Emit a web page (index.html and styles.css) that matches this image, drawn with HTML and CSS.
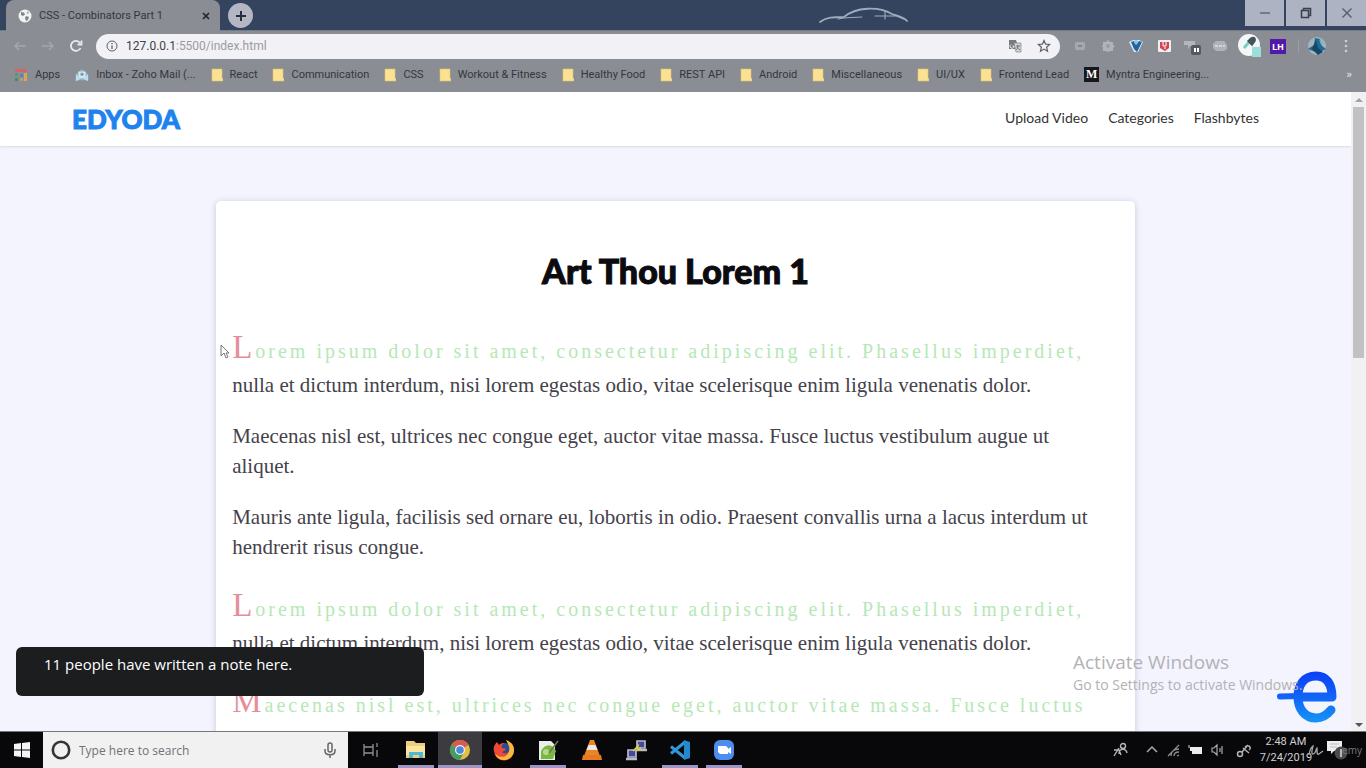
FILE: index.html
```html
<!DOCTYPE html>
<html lang="en">
<head>
<meta charset="utf-8">
<title>CSS - Combinators Part 1</title>
<link rel="stylesheet" href="styles.css">
</head>
<body>
<svg class="defs" aria-hidden="true">
  <symbol id="folder" viewBox="0 0 12 14"><path d="M1 1h10v9l1 1v2H1z" fill="#fbe292" stroke="#e0c86a" stroke-width=".6"/></symbol>
</svg>

<header class="browser">
  <div class="tabstrip">
    <div class="tab">
      <svg class="tab-icon" viewBox="0 0 14 14"><circle cx="7" cy="7" r="6.500" fill="#f1f2f4"/><path d="M3 3l3 .5 1 2-2 1.500-2-1zM8 7l3 1-1 3-2 1-1-3zM9 2l2 2-1.500 1z" fill="#81858c"/></svg>
      <span class="tab-title">CSS - Combinators Part 1</span>
      <button class="tab-close" aria-label="Close tab"><svg width="8" height="8" viewBox="0 0 8 8"><path d="M1 1l6 6M7 1L1 7" stroke="#22252b" stroke-width="1.700"/></svg></button>
    </div>
    <button class="new-tab" aria-label="New tab"><svg width="12" height="12" viewBox="0 0 12 12"><path d="M6 1v10M1 6h10" stroke="#292d35" stroke-width="2"/></svg></button>
    <svg class="car" viewBox="0 0 92 18" fill="none" stroke="#9fabbe" stroke-linecap="round"><path d="M2 15c6-5 14-5 24-5M26 10C38 0 60-1 74 7c6 2 12 3 15 7" stroke-width="1.800"/><path d="M20 12c8-2 14-1 24-2M57 9h22M67 4v8M76 8l12 5" stroke-width="1.100"/></svg>
    <div class="window-buttons">
      <button aria-label="Minimize"><svg width="12" height="12" viewBox="0 0 12 12"><path d="M1 6h10" stroke="#565b66" stroke-width="1.300"/></svg></button>
      <button aria-label="Restore"><svg width="12" height="12" viewBox="0 0 12 12" fill="none" stroke="#3b3f49" stroke-width="1.500"><path d="M1.500 3.500h7v7h-7zM3.500 3V1.500h7v7H9"/></svg></button>
      <button aria-label="Close"><svg width="12" height="12" viewBox="0 0 12 12"><path d="M1.500 1.500l9 9M10.500 1.500l-9 9" stroke="#565b66" stroke-width="1.300"/></svg></button>
    </div>
  </div>

  <div class="toolbar">
    <button aria-label="Back"><svg viewBox="0 0 16 16" fill="none" stroke="#a3a6ad" stroke-width="1.500"><path d="M14 8H3M7 4L3 8l4 4"/></svg></button>
    <button aria-label="Forward"><svg viewBox="0 0 16 16" fill="none" stroke="#a3a6ad" stroke-width="1.500"><path d="M2 8h11M9 4l4 4-4 4"/></svg></button>
    <button aria-label="Reload"><svg viewBox="0 0 16 16" fill="none" stroke="#e9eaed" stroke-width="1.800"><path d="M12.500 10A5 5 0 1 1 12 5M13.500 2.500v4h-4"/></svg></button>
    <div class="address">
      <svg class="i12" viewBox="0 0 12 12" fill="none" stroke="#5d6067"><circle cx="6" cy="6" r="5"/><path d="M6 5.500V9M6 3v1.200" stroke-width="1.300"/></svg>
      <p class="url"><b>127.0.0.1</b>:5500/index.html</p>
      <svg class="i14" viewBox="0 0 14 14"><path d="M1 1h7l3 9H1z" fill="#777a80"/><path d="M6 4h7v9H8z" fill="#d1d2d5" stroke="#85888d" stroke-width=".7"/><path d="M3 5.500a2 2 0 1 0 3 1.500H4.500" fill="none" stroke="#eee"/><path d="M8 7h4M10 6v1c0 2-1 3-2 4M9 8c1 2 2 2 3 3" stroke="#666" fill="none" stroke-width=".8"/></svg>
      <svg class="i14 star" viewBox="0 0 14 14"><path d="M7 1.500l1.600 3.700 4 .3-3 2.700.9 4L7 10.100l-3.500 2.100.9-4-3-2.700 4-.3z" fill="none" stroke="#5d6067" stroke-width="1.200"/></svg>
    </div>
    <div class="extensions">
      <svg viewBox="0 0 20 20"><rect x="5" y="6" width="10" height="8" rx="2" fill="#a5a8ae"/><rect x="8" y="9" width="4" height="2" fill="#83868c"/></svg>
      <svg viewBox="0 0 20 20"><path d="M10 4l2 2h3v3l2 1-2 2v3h-3l-2 1-2-1H5v-3l-1-2 1-1V6h3z" fill="#b1b3b8"/><circle cx="10" cy="10" r="2" fill="#9a9da3"/></svg>
      <svg viewBox="0 0 20 20"><path d="M3 6l4-2h6l4 2-5 10h-4z" fill="#dcecf5"/><path d="M5 6l3-1 2 4 3-4 3 1-5 10-3-3z" fill="#2264a0"/><circle cx="10" cy="6" r="2" fill="#8bc2e4"/></svg>
      <svg viewBox="0 0 20 20"><rect x="4" y="4" width="13" height="12" rx="1" fill="#f2edef"/><path d="M6 6h9v6l-4 3-5-3z" fill="#cb4854"/><path d="M9 6v4h3V6M10 12h2" stroke="#fff" fill="none"/></svg>
      <svg viewBox="0 0 20 20"><path d="M2 5h11v5H8L6 13V9H2z" fill="#b3b6bb"/><rect x="9" y="9" width="10" height="10" rx="2" fill="#55585e"/><path d="M12 12h2v4h-2zM15 12h2v4h-2z" fill="#fff"/></svg>
      <svg viewBox="0 0 20 20"><path d="M6 5h8l3 4v4l-3 2H6l-3-3V8z" fill="#b0b2b7"/><path d="M5 10h10" stroke="#d3d4d7" stroke-width="2" stroke-dasharray="3 1"/></svg>
      <svg class="big" viewBox="0 0 24 24"><circle cx="11" cy="11" r="11" fill="#f5f6f7"/><path d="M6 14l6-7" stroke="#75cfc5" stroke-width="3"/><path d="M11 6c3-4 7-3 6 1l-3 4-4-4z" stroke="#43545b" stroke-width="1.500" fill="#43545b"/><rect x="14" y="13" width="9" height="10" fill="#9be0d8"/></svg>
      <span class="lh">LH</span>
      <i class="divider"></i>
      <svg class="avatar" viewBox="0 0 20 20"><circle cx="10" cy="10" r="9" fill="#a3b4bd"/><path d="M1 13l6-4 1-7 5 1 2 7 4 3-8 4z" fill="#216996"/><path d="M5 13l4-9 2 8 5 4-5 3z" fill="#184766"/><path d="M12 3l5 5-3 1z" fill="#6bbbc7"/></svg>
      <svg class="dots" viewBox="0 0 4 14" fill="#ced0d4"><circle cx="2" cy="2" r="1.300"/><circle cx="2" cy="7" r="1.300"/><circle cx="2" cy="12" r="1.300"/></svg>
    </div>
  </div>

  <nav class="bookmarks" aria-label="Bookmarks">
    <a href="#" class="apps"><svg viewBox="0 0 14 14"><path d="M1 1h12v3H1z" fill="#d3646b"/><path d="M1 5h3v3H1z" fill="#4f9e69"/><path d="M6 6h3v3H6z" fill="#4e83ce"/><path d="M10 5h3v8h-3z" fill="#d6a657"/><path d="M1 10h3v3H1z" fill="#3f9464"/><path d="M6 10h3v3H6z" fill="#c49b54"/></svg>Apps</a>
    <a href="#" class="mail"><svg viewBox="0 0 16 16"><path d="M1 7l7-6 7 6v7H1z" fill="#86b5dc"/><path d="M4 4h8v6l-4 2-4-2z" fill="#ece5cf"/><path d="M1 7l6 5-6 3M15 7l-6 5 6 3" fill="#bcdcf1"/><circle cx="8" cy="7" r="2" fill="#6da3cf"/></svg>Inbox - Zoho Mail (...</a>
    <a href="#"><svg><use href="#folder"/></svg>React</a>
    <a href="#"><svg><use href="#folder"/></svg>Communication</a>
    <a href="#"><svg><use href="#folder"/></svg>CSS</a>
    <a href="#"><svg><use href="#folder"/></svg>Workout &amp; Fitness</a>
    <a href="#"><svg><use href="#folder"/></svg>Healthy Food</a>
    <a href="#"><svg><use href="#folder"/></svg>REST API</a>
    <a href="#"><svg><use href="#folder"/></svg>Android</a>
    <a href="#"><svg><use href="#folder"/></svg>Miscellaneous</a>
    <a href="#"><svg><use href="#folder"/></svg>UI/UX</a>
    <a href="#"><svg><use href="#folder"/></svg>Frontend Lead</a>
    <a href="#"><span class="medium">M</span>Myntra Engineering...</a>
    <button class="more" aria-label="More bookmarks">»</button>
  </nav>
</header>

<div class="viewport">
  <div class="page">
    <header class="site-header">
      <a class="logo" href="#">EDYODA</a>
      <nav class="site-nav"><a href="#">Upload Video</a><a href="#">Categories</a><a href="#">Flashbytes</a></nav>
    </header>
    <main class="article">
      <svg class="cursor" viewBox="0 0 10 15"><path d="M1 1v11l3-3 2 5 2-1-2-4h3z" fill="#fff" stroke="#77757f"/></svg>
      <h1>Art Thou Lorem 1</h1>
      <p class="lead-in">Lorem ipsum dolor sit amet, consectetur adipiscing elit. Phasellus imperdiet, nulla et dictum interdum, nisi lorem egestas odio, vitae scelerisque enim ligula venenatis dolor.</p>
      <p>Maecenas nisl est, ultrices nec congue eget, auctor vitae massa. Fusce luctus vestibulum augue ut aliquet.</p>
      <p>Mauris ante ligula, facilisis sed ornare eu, lobortis in odio. Praesent convallis urna a lacus interdum ut hendrerit risus congue.</p>
      <p class="lead-in">Lorem ipsum dolor sit amet, consectetur adipiscing elit. Phasellus imperdiet, nulla et dictum interdum, nisi lorem egestas odio, vitae scelerisque enim ligula venenatis dolor.</p>
      <p class="lead-in">Maecenas nisl est, ultrices nec congue eget, auctor vitae massa. Fusce luctus vestibulum augue ut aliquet.</p>
    </main>
  </div>
  <div class="scrollbar" aria-hidden="true">
    <svg viewBox="0 0 8 6"><path d="M0 5l4-4 4 4z" fill="#a2a2a6"/></svg>
    <div class="track"><div class="thumb"></div></div>
    <svg viewBox="0 0 8 6"><path d="M0 1l4 4 4-4z" fill="#55555b"/></svg>
  </div>
  <svg class="e-logo" viewBox="0 0 62 54" fill="none" stroke-linecap="round" stroke-linejoin="round">
    <defs><linearGradient id="e" x1="0" y1="0" x2="0" y2="54" gradientUnits="userSpaceOnUse"><stop stop-color="#0b3df5"/><stop offset=".5" stop-color="#1164f6"/><stop offset="1" stop-color="#1598f4"/></linearGradient></defs>
    <path d="M4 26.500L24 26" stroke="url(#e)" stroke-width="6"/><path d="M22 27h34C56 13 50 6 40 6 28 6 22 15 22 27s7 21 18 21c7 0 11-3 15-8" stroke="url(#e)" stroke-width="9"/>
  </svg>
  <div class="activate"><p class="activate-title">Activate Windows</p><p>Go to Settings to activate Windows.</p></div>
  <div class="note" role="status">11 people have written a note here.</div>
</div>

<footer class="taskbar">
  <button class="start" aria-label="Start"><svg width="16" height="16" viewBox="0 0 16 16" fill="#f4f4f4"><path d="M0 2l7-1v6.500H0zM8 1l8-1v7.500H8zM0 8.500h7V15l-7-1zM8 8.500h8V16l-8-1z"/></svg></button>
  <label class="search"><svg width="20" height="20" viewBox="0 0 20 20"><circle cx="10" cy="10" r="8.200" fill="none" stroke="#34343a" stroke-width="2.600"/></svg><input type="text" placeholder="Type here to search" aria-label="Type here to search"><svg width="12" height="16" viewBox="0 0 12 16" fill="none" stroke="#66666b" stroke-width="1.500"><rect x="4" y="1" width="4" height="9" rx="2"/><path d="M1 7v2c0 5 10 5 10 0V7M6 12.500V16"/></svg></label>
  <div class="apps-row">
    <button class="task-view" aria-label="Task view"><svg viewBox="0 0 22 22" fill="none" stroke="#909094" stroke-width="1.300"><path d="M4 5v3h9V5M4 17v-3h9v3M4 8v6h9V8M17 4v4M17 11v7"/></svg></button>
    <button class="open" aria-label="File Explorer"><svg viewBox="0 0 22 22"><path d="M1 2h8l2 2h9v15H1z" fill="#edcd7e"/><path d="M1 7h19v9H1z" fill="#f9e5a1"/><path d="M4 19v-6h14v6h-4v-3H8v3z" fill="#52b7d0"/></svg></button>
    <button class="open active" aria-label="Chrome"><svg viewBox="0 0 22 22"><circle cx="11" cy="11" r="10" fill="#e3bd46"/><path d="M11 11L2.300 6A10 10 0 0 1 19.700 6z" fill="#d65b52"/><path d="M2.300 6A10 10 0 0 0 11 21l4-8-4-2z" fill="#489b63"/><circle cx="11" cy="11" r="5" fill="#f2f3f5"/><circle cx="11" cy="11" r="3.800" fill="#4d87dc"/></svg></button>
    <button aria-label="Firefox"><svg viewBox="0 0 22 22"><circle cx="12" cy="11" r="7" fill="#294c93"/><path d="M4 3l2 3c2-2 4-2 6-2-3 1-4 3-3 5l4 1c-1 2-3 2-4 3 3 3 8 1 8-4 0-4-2-6-4-8 5 2 8 5 8 10a10 10 0 0 1-20 1c-1-3 0-6 3-9z" fill="#ef4937"/><path d="M13 1c5 2 8 5 8 10 0 6-5 10-10 10-4 0-7-2-9-6 9 7 16 0 14-8z" fill="#f6bb3b"/></svg></button>
    <button class="open" aria-label="Notepad++"><svg viewBox="0 0 22 22"><path d="M2 2h12l4 4v15H2z" fill="#ebede8"/><path d="M4 12c3-6 9-8 13-3l2 3-3 8H4z" fill="#78b843"/><circle cx="9" cy="13" r="3" fill="#b7d989"/><path d="M12 14l9-12" stroke="#77705d" stroke-width="1.500"/></svg></button>
    <button aria-label="VLC"><svg viewBox="0 0 22 22"><path d="M9 1h4l6 16H3z" fill="#e98428"/><path d="M7.500 6h7l2 5h-11z" fill="#eee9e2"/><path d="M2 16h18l1 5H1z" fill="#e77a20"/></svg></button>
    <button aria-label="PuTTY"><svg viewBox="0 0 22 22"><path d="M12 2h8v7h-8zM3 11h8v7H3z" fill="#4647a0" stroke="#b9bbc6" stroke-width="1.700"/><path d="M12 11h10M1 20h11" stroke="#b9bbc6" stroke-width="2.500"/><path d="M8 12l5-5-1 4 4-2" stroke="#ddcf40" stroke-width="1.500" fill="none"/></svg></button>
    <button class="open" aria-label="Visual Studio Code"><svg viewBox="0 0 22 22" fill="none"><path d="M16 3L2 14.500M16 19L2 7.500" stroke="#2f97da" stroke-width="3"/><path d="M15 1l6 2v16l-6 2z" fill="#2388cd"/></svg></button>
    <button class="open" aria-label="Zoom"><svg viewBox="0 0 22 22"><rect x="1" y="1" width="20" height="20" rx="6" fill="#4c8df0"/><path d="M5 7h8l2 2v6H7l-2-2zM15 10l3-2v7l-3-2z" fill="#fff"/></svg></button>
  </div>
  <div class="tray">
    <svg class="people" viewBox="0 0 16 16" fill="none" stroke="#b7b7ba" stroke-width="1.400"><circle cx="11" cy="4" r="2.500"/><path d="M7 12c0-6 7-6 8-1M2 14l5-8M2 8h5l2 5"/></svg>
    <svg viewBox="0 0 16 16" fill="none" stroke="#aaa" stroke-width="1.500"><path d="M3 10l5-5 5 5"/></svg>
    <svg viewBox="0 0 16 16" fill="none" stroke="#8d8d91" stroke-width="1.300"><path d="M2 14L13 3M5 14c0-4 3-7 8-7M8 14c0-3 2-4 5-4M11 14l2-1"/></svg>
    <svg viewBox="0 0 16 16"><path d="M2 5h12v7H4V9H2z" fill="#ededed"/><path d="M1 3v3" stroke="#ddd"/></svg>
    <svg viewBox="0 0 16 16" fill="none" stroke="#aaaaad" stroke-width="1.200"><path d="M2 6h2l3-3v10l-3-3H2zM10 6v4M12 4v8"/></svg>
    <svg class="link" viewBox="0 0 16 16" fill="none" stroke="#b3b3b6" stroke-width="1.500"><circle cx="4" cy="12" r="2.500"/><path d="M6 10l6-7M7 6l6 5M9 5c4-3 7 1 4 3"/></svg>
    <time class="clock">2:48 AM<br>7/24/2019</time>
    <svg class="pen" viewBox="0 0 16 16" fill="none" stroke="#a7a7aa" stroke-width="1.300"><path d="M1 13c1-6 2-8 4-9-1 4-2 8 0 8 3 0 3-6 4-6 0 5 0 7 2 6l4-3"/></svg>
    <div class="action"><svg width="24" height="22" viewBox="0 0 24 22"><path d="M1 2h15v10H8l-3 3v-3H1z" fill="#eee"/><path d="M4 5h9M4 8h7" stroke="#bbb"/><circle cx="15" cy="14" r="6.500" fill="#4c4c50"/><path d="M15 10v8" stroke="#ddd" stroke-width="1.500"/></svg><span>emy</span></div>
  </div>
</footer>
</body>
</html>
```
FILE: styles.css
```css
* { box-sizing: border-box; }
body {
  margin: 0;
  height: 100vh;
  display: flex;
  flex-direction: column;
  overflow: hidden;
  background: #f4f4ff;
  font-family: "Open Sans", "Noto Sans", sans-serif;
}
p { margin: 0; }
a { color: inherit; text-decoration: none; }
button { border: 0; padding: 0; background: none; font: inherit; color: inherit; display: flex; align-items: center; justify-content: center; }
svg { flex: none; display: block; }
.defs { position: absolute; width: 0; height: 0; }

/* Browser frame */
.browser { flex: none; background: #8a8d94; color: #34373e; }
.tabstrip { display: flex; height: 31px; background: #34445f; border-bottom: 1px solid #737b88; }
.tab { display: flex; align-items: center; width: 214px; margin-left: 6px; padding: 0 10px 0 12px; background: #8a8d94; border-radius: 8px 8px 0 0; height: 31px; }
.tab-icon { width: 14px; height: 14px; }
.tab-title { flex: 1; margin-left: 7px; font-size: 11px; font-family: Roboto, sans-serif; }
.new-tab { width: 25px; height: 25px; margin: 3px 0 0 8px; border-radius: 50%; background: #b3b7c3; }
.car { width: 92px; height: 18px; margin: 7px auto 0 565px; }
.window-buttons { display: flex; gap: 2px; height: 26px; }
.window-buttons button { width: 39px; background: #adb3c2; }

.toolbar { display: flex; align-items: center; height: 30px; padding: 0 18px 0 12px; }
.toolbar > button { width: 16px; height: 16px; margin-right: 12px; }
.toolbar > button svg { width: 16px; height: 16px; }
.address { flex: 1; display: flex; align-items: center; height: 25px; border-radius: 13px; background: #f2f2f6; padding: 0 9px 0 10px; }
.i12 { width: 12px; height: 12px; }
.i14 { width: 14px; height: 14px; }
.star { margin-left: 15px; }
.url { flex: 1; margin-left: 8px; font: 12px Roboto, sans-serif; color: #999ba1; }
.url b { font-weight: 400; color: #404249; }
.extensions { display: flex; align-items: center; gap: 8px; padding-left: 10px; }
.extensions svg { width: 20px; height: 20px; }
.extensions .big { width: 24px; height: 24px; }
.lh { width: 16px; height: 15px; background: #5218a8; color: #fff; font-size: 9px; line-height: 15px; font-weight: 700; text-align: center; }
.divider { width: 1px; height: 14px; background: #9b9ea5; margin: 0 2px 0 4px; }
.extensions .dots { width: 4px; height: 14px; margin-left: 9px; }
.extensions .avatar { margin-left: -2px; }

.bookmarks { display: flex; align-items: center; height: 31px; padding: 0 14px 4px; gap: 15px; font: 11px Roboto, sans-serif; white-space: nowrap; }
.bookmarks a { display: flex; align-items: center; gap: 7px; }
.bookmarks svg { width: 12px; height: 14px; }
.bookmarks .apps svg, .bookmarks .mail svg { width: 14px; height: 16px; }
.medium { width: 15px; height: 15px; background: #17181b; color: #fff; font: 700 12px/15px "Liberation Serif", serif; text-align: center; }
.more { margin-left: auto; color: #dcdde0; font-weight: 700; }

/* Web page */
.viewport { flex: 1; min-height: 0; position: relative; display: flex; }
.page { flex: 1; min-width: 0; overflow: hidden; }
.site-header { display: flex; justify-content: space-between; align-items: center; height: 54px; padding: 0 92px 0 72px; background: #fff; box-shadow: 0 1px 2px #dcd8e2; font-family: Lato, sans-serif; }
.logo { font-size: 26px; font-weight: 900; color: #1f83ee; -webkit-text-stroke: 1px #1f83ee; }
.site-nav { display: flex; gap: 20px; padding-bottom: 3px; font-size: 14px; color: #333; }
.article { position: relative; width: 68%; margin: 55px auto 0; padding: 48px 16px; background: #fff; border-radius: 5px; box-shadow: 0 1px 6px #c9c7d8; color: #45424b; font: 21px/30px "Liberation Serif", serif; }
.article h1 { margin: 0 0 32px; font: 900 34px/44px Lato, sans-serif; color: #0b0b10; text-align: center; -webkit-text-stroke: 1px #0b0b10; }
.article p { margin: 0 12px 21px 0; }
.lead-in::first-line { color: #b5e8b6; font-size: 20px; letter-spacing: 3px; }
.lead-in::first-letter { color: #e58e9a; font-size: 33px; line-height: 45px; }
.cursor { position: absolute; left: 4px; top: 143px; width: 10px; height: 15px; }
.scrollbar { width: 15px; display: flex; flex-direction: column; align-items: center; background: #f1f0f3; padding: 5px 2px 3px; gap: 4px; }
.scrollbar svg { width: 8px; height: 6px; }
.track { flex: 1; align-self: stretch; }
.thumb { height: 41%; background: #c1c1c4; }

/* Overlays */
.e-logo { position: absolute; right: 28px; bottom: 7px; width: 62px; height: 54px; }
.activate { position: absolute; left: 1073px; bottom: 36px; color: #b2b2b5; font-size: 14px; line-height: 20px; white-space: nowrap; }
.activate-title { font-size: 19px; line-height: 25px; }
.note { position: absolute; left: 16px; bottom: 35px; width: 408px; height: 49px; padding: 7px 28px; border-radius: 6px; background: #1c1d1f; color: #fff; font-size: 15px; line-height: 20px; }

/* Taskbar */
.taskbar { flex: none; display: flex; height: 37px; background: #08080a; border-top: 1px solid #77777b; }
.start { width: 43px; }
.search { display: flex; align-items: center; width: 305px; padding: 0 12px 0 8px; background: #f1f1f1; }
.search input { flex: 1; min-width: 0; border: 0; background: none; padding: 0 8px; font: 12px "Open Sans", sans-serif; }
.search input::placeholder { color: #717176; opacity: 1; }
.apps-row { display: flex; }
.apps-row button { width: 44px; }
.apps-row .task-view { width: 46px; }
.apps-row svg { width: 22px; height: 22px; }
.apps-row .open { background: linear-gradient(#9e94c8, #9e94c8) bottom / 36px 3px no-repeat; }
.apps-row .active { background-color: #3c3b40; background-size: 44px 3px; }
.tray { margin-left: auto; display: flex; align-items: center; gap: 6px; padding-right: 4px; }
.tray > svg { width: 16px; height: 16px; }
.tray .people { margin-right: 10px; }
.tray .link { margin: 0 2px 0 4px; }
.tray .pen { margin: 0 -4px 0 -10px; }
.clock { font: 11px/16px Roboto, sans-serif; color: #d0d0d2; text-align: center; }
.action { display: flex; align-items: center; color: #7b7b80; font-size: 10px; }
.action span { margin-left: -8px; }
```
